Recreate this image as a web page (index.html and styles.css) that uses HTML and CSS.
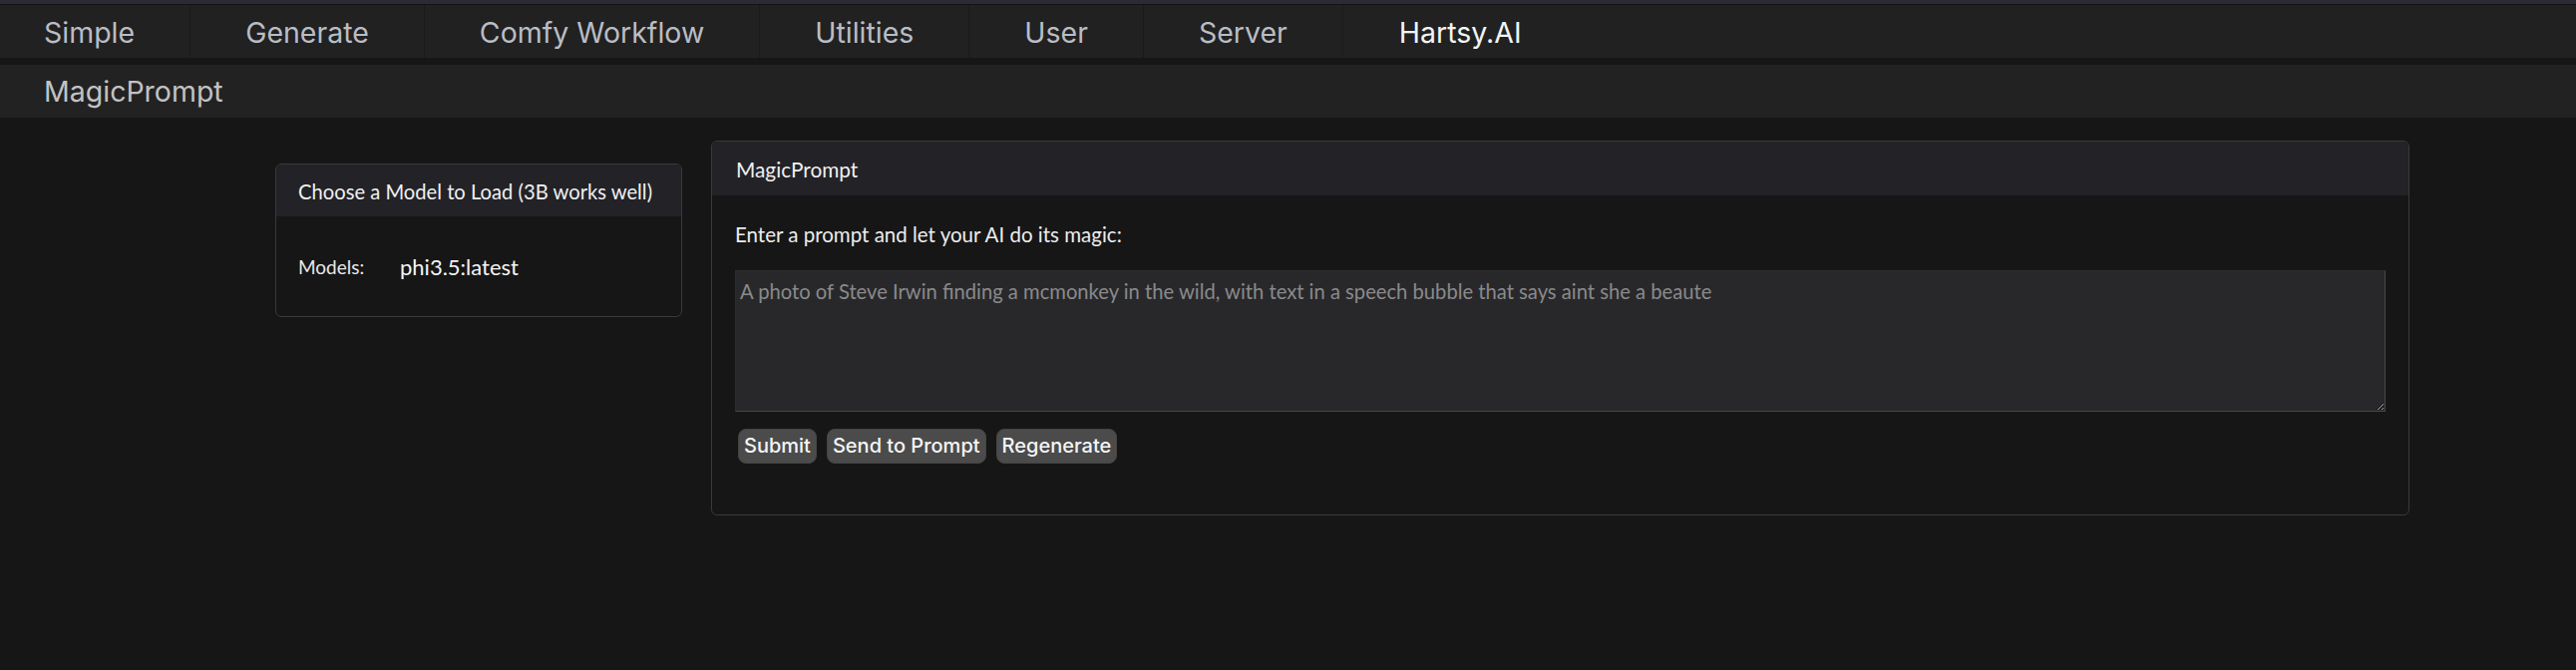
FILE: index.html
```html
<!DOCTYPE html>
<html lang="en">
<head>
<meta charset="utf-8">
<title>MagicPrompt</title>
<link rel="stylesheet" href="styles.css">
</head>
<body>
<div class="topstrip"></div>
<nav class="tabs">
  <div class="tab first">Simple</div>
  <div class="tab">Generate</div>
  <div class="tab">Comfy Workflow</div>
  <div class="tab">Utilities</div>
  <div class="tab">User</div>
  <div class="tab">Server</div>
  <div class="tab active">Hartsy.AI</div>
</nav>
<div class="subtabs">
  <div class="subtab">MagicPrompt</div>
</div>
<main class="content">
  <section class="card model-card">
    <div class="card-header">Choose a Model to Load (3B works well)</div>
    <div class="card-body model-body">
      <span class="label">Models:</span>
      <span class="model-value">phi3.5:latest</span>
    </div>
  </section>
  <section class="card prompt-card">
    <div class="card-header">MagicPrompt</div>
    <div class="card-body prompt-body">
      <div class="prompt-label">Enter a prompt and let your AI do its magic:</div>
      <textarea class="prompt-input" placeholder="A photo of Steve Irwin finding a mcmonkey in the wild, with text in a speech bubble that says aint she a beaute"></textarea>
      <div class="buttons">
        <button class="btn">Submit</button>
        <button class="btn">Send to Prompt</button>
        <button class="btn">Regenerate</button>
      </div>
    </div>
  </section>
</main>
</body>
</html>
```
FILE: styles.css
```css
html, body {
  margin: 0;
  padding: 0;
  background: #161616;
  height: 100%;
}
body {
  font-family: "Lato", "Noto Sans", sans-serif;
  color: #e6e6e6;
}
.topstrip {
  height: 4px;
  background: #2b2a35;
}
.tabs {
  display: flex;
  height: 53px;
  background: #212121;
  border-top: 1px solid #121212;
  font-family: "Inter", sans-serif;
  font-size: 28.5px;
}
.tab {
  padding: 3px 55px 0 55px;
  line-height: 50px;
  color: #b9bdc5;
  border-right: 1px solid #1a1a1a;
  white-space: nowrap;
}
.tab.first {
  padding-left: 44px;
}
.tab.active {
  color: #f3f3f3;
  border-right: none;
  padding-left: 56px;
}
.subtabs {
  margin-top: 7px;
  height: 53px;
  background: #222222;
  font-family: "Inter", sans-serif;
  font-size: 28.5px;
}
.subtab {
  padding-left: 44px;
  line-height: 54px;
  color: #c2c2c2;
}
.content {
  display: flex;
  align-items: flex-start;
  gap: 29px;
  padding: 23px 0 0 276px;
}
.card {
  border: 1px solid #3a3a3a;
  border-radius: 6px;
  background: #161616;
  overflow: hidden;
}
.card-header {
  background: #222227;
  color: #f0f0f0;
}
.model-card {
  width: 406px;
  margin-top: 23px;
}
.model-card .card-header {
  height: 52px;
  line-height: 54px;
  padding-left: 22px;
  font-size: 20.2px;
}
.model-body {
  display: flex;
  align-items: center;
  height: 100px;
  padding-left: 22px;
}
.label {
  font-size: 19px;
  color: #e8e8e8;
  width: 102px;
}
.model-value {
  font-size: 22px;
  color: #f4f4f4;
}
.prompt-card {
  width: 1701px;
}
.prompt-card .card-header {
  height: 54px;
  line-height: 56px;
  padding-left: 24px;
  font-size: 20.8px;
}
.prompt-body {
  padding: 26px 23px 51px 23px;
}
.prompt-label {
  font-size: 20.5px;
  line-height: 27px;
  color: #ececec;
}
.prompt-input {
  display: block;
  box-sizing: border-box;
  width: 100%;
  height: 142px;
  margin-top: 22px;
  padding: 7px 4px;
  background: #28282b;
  border: 1px solid #2c2c30;
  border-right-color: #47474c;
  border-bottom-color: #47474c;
  color: #e0e0e0;
  font-family: "Lato", "Noto Sans", sans-serif;
  font-size: 20.2px;
  line-height: 27px;
  outline: none;
}
.prompt-input::placeholder {
  color: #8a8a8a;
}
.buttons {
  display: flex;
  gap: 10px;
  margin-top: 17px;
  padding-left: 3px;
}
.btn {
  height: 35px;
  padding: 0 5px;
  background: #4b4b4b;
  border: 1px solid #444;
  border-radius: 8px;
  color: #f5f5f5;
  font-family: "Inter", sans-serif;
  font-weight: 500;
  font-size: 20px;
  line-height: 33px;
}
```
